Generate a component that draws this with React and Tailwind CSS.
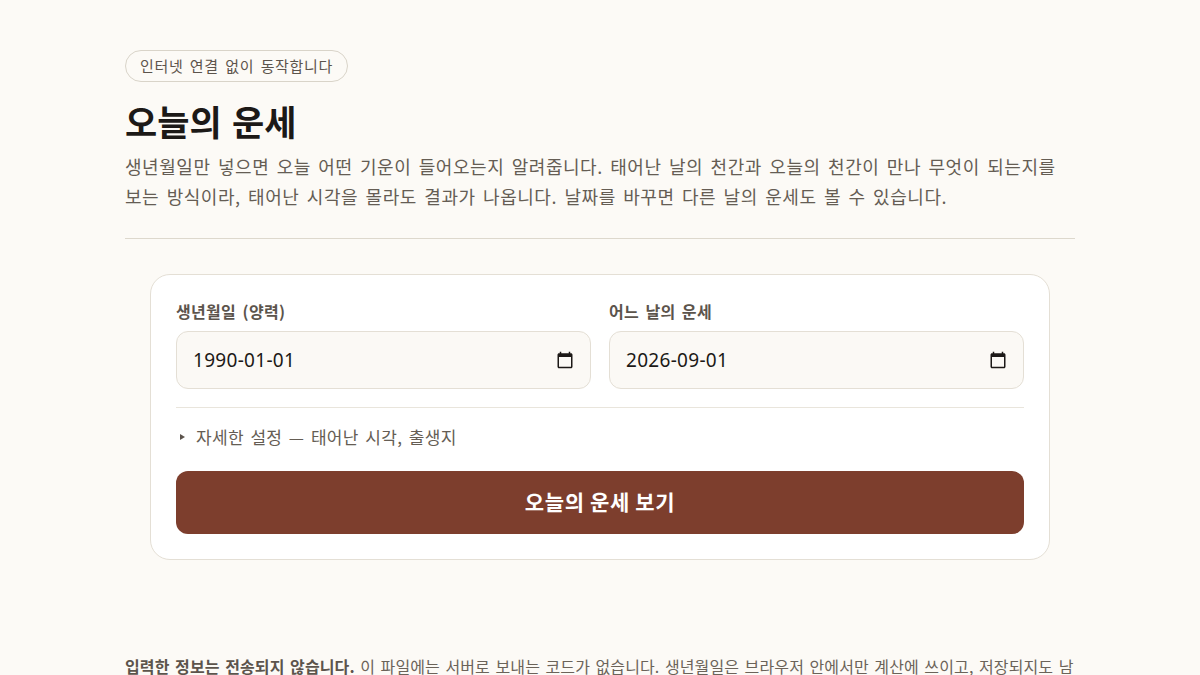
function CalendarIcon() {
  return (
    <svg viewBox="0 0 24 24" className="w-[18px] h-[18px] shrink-0 fill-[#1c1917]">
      <path d="M20 3h-1V1h-2v2H7V1H5v2H4c-1.1 0-2 .9-2 2v16c0 1.1.9 2 2 2h16c1.1 0 2-.9 2-2V5c0-1.1-.9-2-2-2zm0 18H4V8h16v13z" />
    </svg>
  );
}

function DateField({ label, defaultValue }) {
  return (
    <label className="block min-w-0">
      <span className="block mb-[8px] text-[16px] leading-[23px] font-semibold text-[#5c544c]">{label}</span>
      <div className="flex items-center h-[58px] px-[16px] rounded-[12px] border border-[#e4dfd5] bg-[#fbf9f5]">
        <input
          type="text"
          defaultValue={defaultValue}
          className="flex-1 min-w-0 bg-transparent text-[19px] tracking-[0.3px] text-[#1c1917] outline-none font-['Noto_Sans',sans-serif]"
        />
        <CalendarIcon />
      </div>
    </label>
  );
}

export default function App() {
  return (
    <div className="min-h-screen bg-[#fcfaf6] text-[#1c1917] font-['Noto_Sans_CJK_KR','Noto_Sans',sans-serif] tracking-[0.02em] [word-spacing:0.15em]">
      <div className="max-w-[950px] mx-auto pt-[50px] pb-[40px]">
        <header className="pb-[27px] border-b border-[#ddd8cd]">
          <span className="inline-block h-[32px] px-[14px] rounded-full border border-[#d9d4c9] text-[15px] leading-[30px] tracking-[0.045em] text-[#5c544c]">
            인터넷 연결 없이 동작합니다
          </span>
          <h1 className="mt-[14px] text-[35px] leading-[50px] font-bold tracking-normal text-[#1c1917]">오늘의 운세</h1>
          <p className="mt-[5px] text-[18px] leading-[30px] tracking-[0.03em] [word-spacing:0.16em] break-keep text-[#655d54]">
            생년월일만 넣으면 오늘 어떤 기운이 들어오는지 알려줍니다. 태어난 날의 천간과 오늘의 천간이 만나 무엇이 되는지를 보는 방식이라, 태어난 시각을 몰라도 결과가 나옵니다. 날짜를 바꾸면 다른 날의 운세도 볼 수 있습니다.
          </p>
        </header>

        <form className="w-[900px] mx-auto mt-[35px] px-[25px] pt-[25px] pb-[25px] bg-white border border-[#e4dfd5] rounded-[20px]">
          <div className="grid grid-cols-2 gap-[18px]">
            <DateField label="생년월일 (양력)" defaultValue="1990-01-01" />
            <DateField label="어느 날의 운세" defaultValue="2026-09-01" />
          </div>
          <details className="mt-[18px] pt-[18px] border-t border-[#e9e5dc]">
            <summary className="flex items-center gap-[11px] pl-[4px] pb-[2px] h-[24px] text-[17px] leading-[22px] text-[#655d54] cursor-pointer list-none">
              <svg viewBox="0 0 5 6" className="w-[5px] h-[6px] fill-[#5c544c]"><path d="M0 0l5 3-5 3z" /></svg>
              자세한 설정 — 태어난 시각, 출생지
            </summary>
          </details>
          <button type="button" className="block w-full h-[63px] mt-[21px] pb-[2px] rounded-[12px] bg-[#7d3e2d] text-white text-[21px] font-bold tracking-[0.03em]">
            오늘의 운세 보기
          </button>
        </form>

        <p className="mt-[92px] text-[16px] leading-[28px] tracking-[0.008em] [word-spacing:0.11em] text-[#6b6359]">
          <strong className="font-semibold text-[#5c544c]">입력한 정보는 전송되지 않습니다.</strong> 이 파일에는 서버로 보내는 코드가 없습니다. 생년월일은 브라우저 안에서만 계산에 쓰이고, 저장되지도 남지 않습니다.
        </p>
      </div>
    </div>
  );
}
